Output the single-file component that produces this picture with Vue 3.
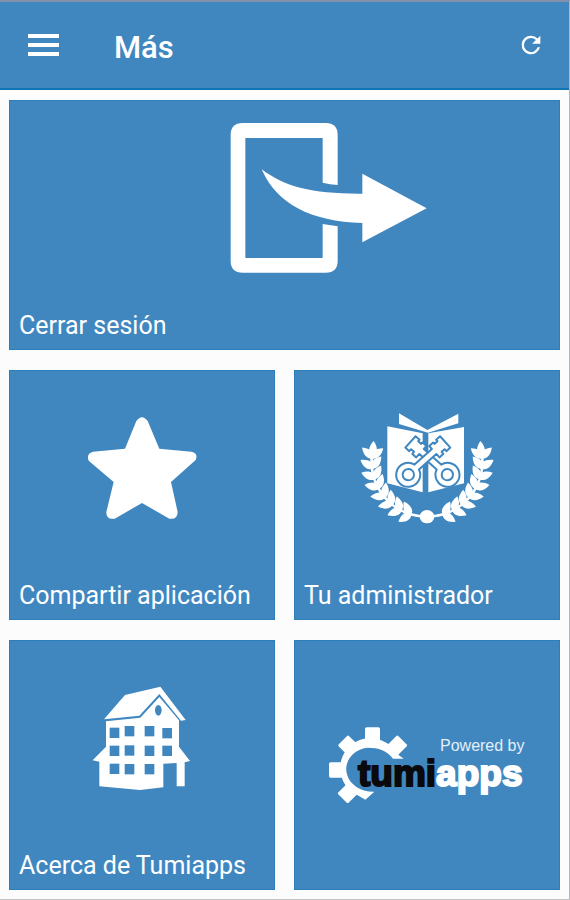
<template>
  <div class="page">
    <header class="bar">
      <button class="bar-btn menu-btn" type="button" aria-label="Menú">
        <svg width="31" height="22" viewBox="0 0 31 22">
          <path d="M0 0h31v4H0zM0 9h31v4H0zM0 18h31v4H0z" fill="currentColor" />
        </svg>
      </button>
      <h1 class="title">Más</h1>
      <button class="bar-btn" type="button" aria-label="Actualizar">
        <svg width="28" height="28" viewBox="0 0 24 24">
          <path
            d="M17.65 6.35A7.96 7.96 0 0 0 12 4a8 8 0 1 0 7.73 10h-2.08A6 6 0 1 1 12 6c1.66 0 3.14.69 4.22 1.78L13 11h7V4z"
            fill="currentColor"
          />
        </svg>
      </button>
    </header>

    <main class="grid">
      <a class="tile wide" href="#salir">
        <span class="icon">
          <svg width="290" height="150" viewBox="-242 42 870 450" fill="#fff">
            <path
              d="M351 228V78Q351 42 315 42H66Q30 42 30 78V455Q30 491 66 491H315Q351 491 351 455V352L306 345V447H74V87H306V221Q328 227 351 228Z"
            />
            <path
              d="M123 181C195 235 275 255 425 254V194L618 298L425 400V342C270 338 168 285 123 181Z"
            />
          </svg>
        </span>
        <span class="label">Cerrar sesión</span>
      </a>

      <a class="tile" href="#compartir">
        <span class="icon">
          <svg width="112" height="106" viewBox="48 45 336 318" fill="#fff">
            <path
              d="M199 63Q216 40 233 63L268 146L364 155Q386 160 377 180L303 246L323 336Q322 360 298 356L216 309L134 356Q108 360 109 336L131 246L56 182Q48 161 69 155L165 146Z"
            />
          </svg>
        </span>
        <span class="label">Compartir aplicación</span>
      </a>

      <a class="tile" href="#administrador">
        <span class="icon">
          <svg width="136" height="112" viewBox="27 36 408 336" fill="#fff">
            <path d="M147 40L232 90L325 41V70L234 98L147 72Z" />
            <path d="M112 79L218 100V277L112 250ZM342 81L235 100V277L342 250Z" />
            <g v-for="k in keys" :key="k" :transform="k" stroke="#4087c0" stroke-width="6" stroke-linejoin="round">
              <path :d="keyPath" />
              <circle r="17" />
            </g>
            <g v-for="side in sides" :key="side" :transform="side">
              <path d="M66 165A165 165 0 0 0 231 350" fill="none" stroke="#fff" stroke-width="8" />
              <path v-for="l in leaves" :key="l" :d="leafPath" :transform="l" />
            </g>
            <ellipse cx="231" cy="350" rx="22" ry="20" />
          </svg>
        </span>
        <span class="label">Tu administrador</span>
      </a>

      <a class="tile" href="#acerca">
        <span class="icon">
          <svg width="100" height="104" viewBox="36 33 300 312" fill="#fff">
            <path d="M72 133L135 60L241 35L317 135L303 137L238 57L178 122Z" />
            <path
              d="M78 139L181 128L238 66L297 136V215L330 258L314 262V334H290V264L250 266V337L180 345L58 334V260L38 256L78 215Z"
            />
            <g fill="#4087c0">
              <rect v-for="w in windows" :key="w.join()" :x="w[0]" :y="w[1]" width="29" height="31" />
              <ellipse cx="235" cy="106" rx="10" ry="16" />
            </g>
          </svg>
        </span>
        <span class="label">Acerca de Tumiapps</span>
      </a>

      <a class="tile logo" href="#tumiapps">
        <svg width="200" height="80" viewBox="0 0 200 80" fill="#fff">
          <svg width="85" height="88" viewBox="6 15 255 264">
            <path
              d="M236 116H204C187 92 160 83 128 83A72 65 0 0 0 98 203Q120 216 148 215L121 239L98 226A90 90 0 1 1 214 100Z"
            />
            <rect x="120" y="22" width="45" height="50" rx="5" />
            <rect x="12" y="127" width="42" height="46" rx="5" />
            <rect x="-22" y="-22" width="44" height="48" rx="5" transform="translate(69 76) rotate(-45)" />
            <rect x="-22" y="-22" width="44" height="44" rx="5" transform="translate(217 76) rotate(45)" />
            <rect x="-22" y="-22" width="44" height="44" rx="5" transform="translate(68 220) rotate(45)" />
          </svg>
          <text class="powered" x="113" y="26">Powered by</text>
          <text class="brand" x="31" y="61"><tspan class="dark">tumi</tspan><tspan class="light">apps</tspan></text>
        </svg>
      </a>
    </main>
  </div>
</template>

<script setup>
// llaves cruzadas: la segunda se dibuja encima
const keys = [
  'translate(292 224) scale(-1 1) rotate(-42)',
  'translate(175 224) rotate(-42)'
]
const keyPath =
  'M34 -10H104V-22H120V-16H132V-22H148V24H132V16H120V24H104V10H34A36 36 0 1 1 34 -10Z'

// ramas de laurel, izquierda y su reflejo
const sides = ['', 'translate(462 0) scale(-1 1)']
const leafPath = 'M0 6C-15 -4 -16 -22 0 -42C16 -22 15 -4 0 6Z'
const leaves = []
for (let a = 18; a <= 98; a += 11) {
  const rad = (a * Math.PI) / 180
  const x = Math.round(231 - 165 * Math.sin(rad))
  const y = Math.round(185 + 165 * Math.cos(rad))
  leaves.push(`translate(${x} ${y}) rotate(${a - 90 - 52})`)
  leaves.push(`translate(${x} ${y}) rotate(${a - 90 + 46})`)
}
leaves.push('translate(68 165) rotate(4)')

const windows = [
  [89, 158], [134, 153], [194, 153], [247, 159],
  [89, 212], [134, 211], [194, 212], [247, 212],
  [89, 266], [134, 267], [194, 267]
]
</script>

<style>
body {
  margin: 0;
  background: #fcfcfc;
}
</style>

<style scoped>
.page {
  min-height: 100vh;
  box-sizing: border-box;
  border-top: 2px solid #8291ab;
  border-right: 1px solid #b4b8bc;
  border-bottom: 1px solid #c4c4c4;
  font-family: Roboto, 'Liberation Sans', sans-serif;
  color: #fff;
}

.bar {
  display: flex;
  align-items: center;
  height: 88px;
  box-sizing: border-box;
  padding: 0 24px 0 28px;
  background: #4087c0;
  border-bottom: 2px solid #0f75b5;
}

.bar-btn {
  display: flex;
  padding: 0;
  border: 0;
  background: none;
  color: #fff;
  cursor: pointer;
}

.menu-btn {
  margin-right: 55px;
}

.title {
  flex: 1;
  margin: 0;
  padding-top: 5px;
  font-size: 31px;
  font-weight: 500;
  line-height: 40px;
}

.grid {
  display: grid;
  grid-template-columns: 1fr 1fr;
  gap: 20px 19px;
  padding: 10px 9px 9px;
}

.tile {
  display: flex;
  flex-direction: column;
  gap: 8px;
  height: 250px;
  box-sizing: border-box;
  background: #4087c0;
  border: 1px solid #2b7fbb;
  color: #fff;
  text-decoration: none;
}

.wide {
  grid-column: 1 / -1;
}

.icon {
  flex: 1;
  display: flex;
  align-items: center;
  justify-content: center;
}

.label {
  padding: 0 9px;
  font-size: 25px;
  line-height: 46px;
  white-space: nowrap;
}

.logo {
  align-items: center;
  justify-content: center;
}

.powered {
  font-family: 'Liberation Sans', sans-serif;
  font-size: 16px;
  fill: #e4eff8;
}

.brand {
  font-family: 'Liberation Sans', sans-serif;
  font-size: 37px;
  font-weight: 700;
  stroke-width: 2px;
}

.dark {
  fill: #0a0a0c;
  stroke: #0a0a0c;
}

.light {
  fill: #fff;
  stroke: #fff;
}
</style>
